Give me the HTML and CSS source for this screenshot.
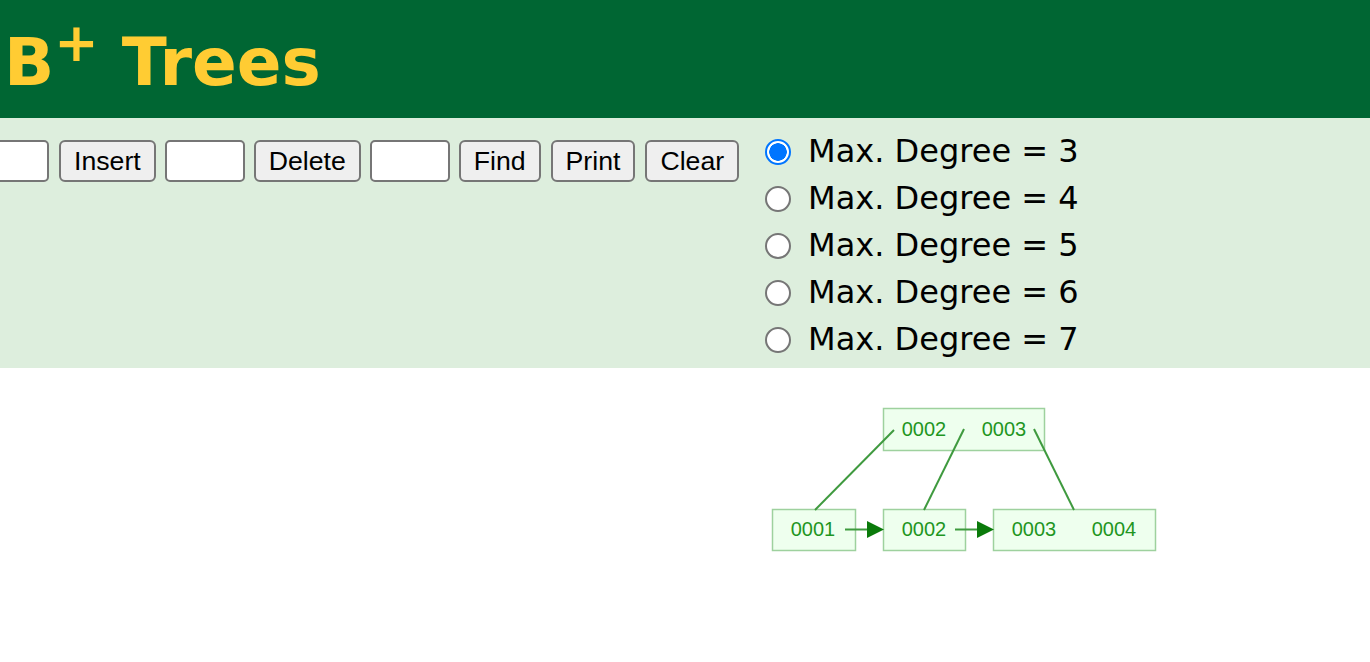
FILE: index.html
```html
<!DOCTYPE html>
<html>
<head>
<meta charset="utf-8">
<title>B+ Tree Visualization</title>
<link rel="stylesheet" href="styles.css">
</head>
<body>
<header class="header">
  <h1 class="title">B<sup class="plus">+</sup> Trees</h1>
</header>
<section class="band">
  <div class="controls">
    <div class="ops">
      <input class="field first" type="text">
      <button class="btn">Insert</button>
      <input class="field" type="text">
      <button class="btn">Delete</button>
      <input class="field" type="text">
      <button class="btn">Find</button>
      <button class="btn spaced">Print</button>
      <button class="btn spaced">Clear</button>
    </div>
    <div class="degrees">
      <label class="deg"><input class="radio" type="radio" name="deg" checked><span>Max. Degree = 3</span></label>
      <label class="deg"><input class="radio" type="radio" name="deg"><span>Max. Degree = 4</span></label>
      <label class="deg"><input class="radio" type="radio" name="deg"><span>Max. Degree = 5</span></label>
      <label class="deg"><input class="radio" type="radio" name="deg"><span>Max. Degree = 6</span></label>
      <label class="deg"><input class="radio" type="radio" name="deg"><span>Max. Degree = 7</span></label>
    </div>
  </div>
</section>
<main class="canvas">
  <svg class="tree" width="1370" height="294" viewBox="0 0 1370 294">
    <g class="nodes">
      <rect x="883.5" y="40.5" width="161" height="42"/>
      <rect x="772.5" y="141.5" width="83" height="41"/>
      <rect x="883.5" y="141.5" width="82" height="41"/>
      <rect x="993.5" y="141.5" width="162" height="41"/>
    </g>
    <g class="keys">
      <text x="924" y="68">0002</text>
      <text x="1004" y="68">0003</text>
      <text x="813" y="168">0001</text>
      <text x="924" y="168">0002</text>
      <text x="1034" y="168">0003</text>
      <text x="1114" y="168">0004</text>
    </g>
    <g class="edges">
      <line x1="815" y1="142" x2="894" y2="62"/>
      <line x1="924" y1="142" x2="964" y2="61"/>
      <line x1="1034" y1="61" x2="1074" y2="142"/>
      <line x1="845" y1="161.5" x2="868" y2="161.5"/>
      <line x1="955" y1="161.5" x2="978" y2="161.5"/>
    </g>
    <g class="heads">
      <polygon points="867,153 884,161.5 867,170"/>
      <polygon points="977,153 994,161.5 977,170"/>
    </g>
  </svg>
</main>
</body>
</html>
```

FILE: styles.css
```css
html, body {
  margin: 0;
  padding: 0;
  background: #ffffff;
  overflow: hidden;
}

.header {
  background: #006633;
  height: 118px;
  box-sizing: border-box;
  padding: 25px 0 0 4px;
}

.title {
  margin: 0;
  font-family: "DejaVu Sans", Verdana, sans-serif;
  font-weight: bold;
  font-size: 66px;
  line-height: 76px;
  color: #ffcc33;
}

.plus {
  font-size: 53px;
  line-height: 0;
  vertical-align: 24px;
}

.band {
  background: #ddeedd;
  height: 250px;
  box-sizing: border-box;
  padding-top: 10px;
}

.controls {
  display: flex;
  align-items: flex-start;
}

.ops {
  display: flex;
  align-items: center;
  gap: 9px;
  margin-top: 12px;
}

.field {
  width: 80px;
  height: 42px;
  box-sizing: border-box;
  border: 2px solid #767676;
  border-radius: 5px;
  background: #ffffff;
  margin: 0;
  padding: 0 4px;
}

.field.first {
  margin-left: -31px;
  margin-right: 1px;
}

.btn {
  height: 42px;
  box-sizing: border-box;
  margin: 0;
  padding: 0 13px;
  border: 2px solid #767676;
  border-radius: 6px;
  background: #efefef;
  color: #000000;
  font-family: "Liberation Sans", Arial, sans-serif;
  font-size: 26.67px;
  line-height: 38px;
}

.btn.spaced {
  margin-left: 1px;
}

.degrees {
  display: flex;
  flex-direction: column;
  margin-left: 26px;
}

.deg {
  display: flex;
  align-items: center;
  height: 47px;
  font-family: "DejaVu Sans", Verdana, sans-serif;
  font-size: 32px;
  line-height: 47px;
  color: #000000;
}

.radio {
  appearance: none;
  -webkit-appearance: none;
  width: 26px;
  height: 26px;
  box-sizing: border-box;
  margin: 0 17px 0 0;
  border: 2px solid #767676;
  border-radius: 50%;
  background: #ffffff;
}

.radio:checked {
  border: 2.5px solid #0075ff;
  background: radial-gradient(circle, #0075ff 0, #0075ff 8.5px, #ffffff 9px);
}

.canvas {
  display: block;
}

.tree {
  display: block;
}

.edges line {
  stroke: #3f9a3f;
  stroke-width: 2;
}

.heads polygon {
  fill: #0a7a0a;
}

.nodes rect {
  fill: #eeffee;
  stroke: #9ed19e;
  stroke-width: 1.5;
}

.keys text {
  font-family: "Liberation Sans", Arial, sans-serif;
  font-size: 20px;
  fill: #1f961f;
  text-anchor: middle;
}
```
